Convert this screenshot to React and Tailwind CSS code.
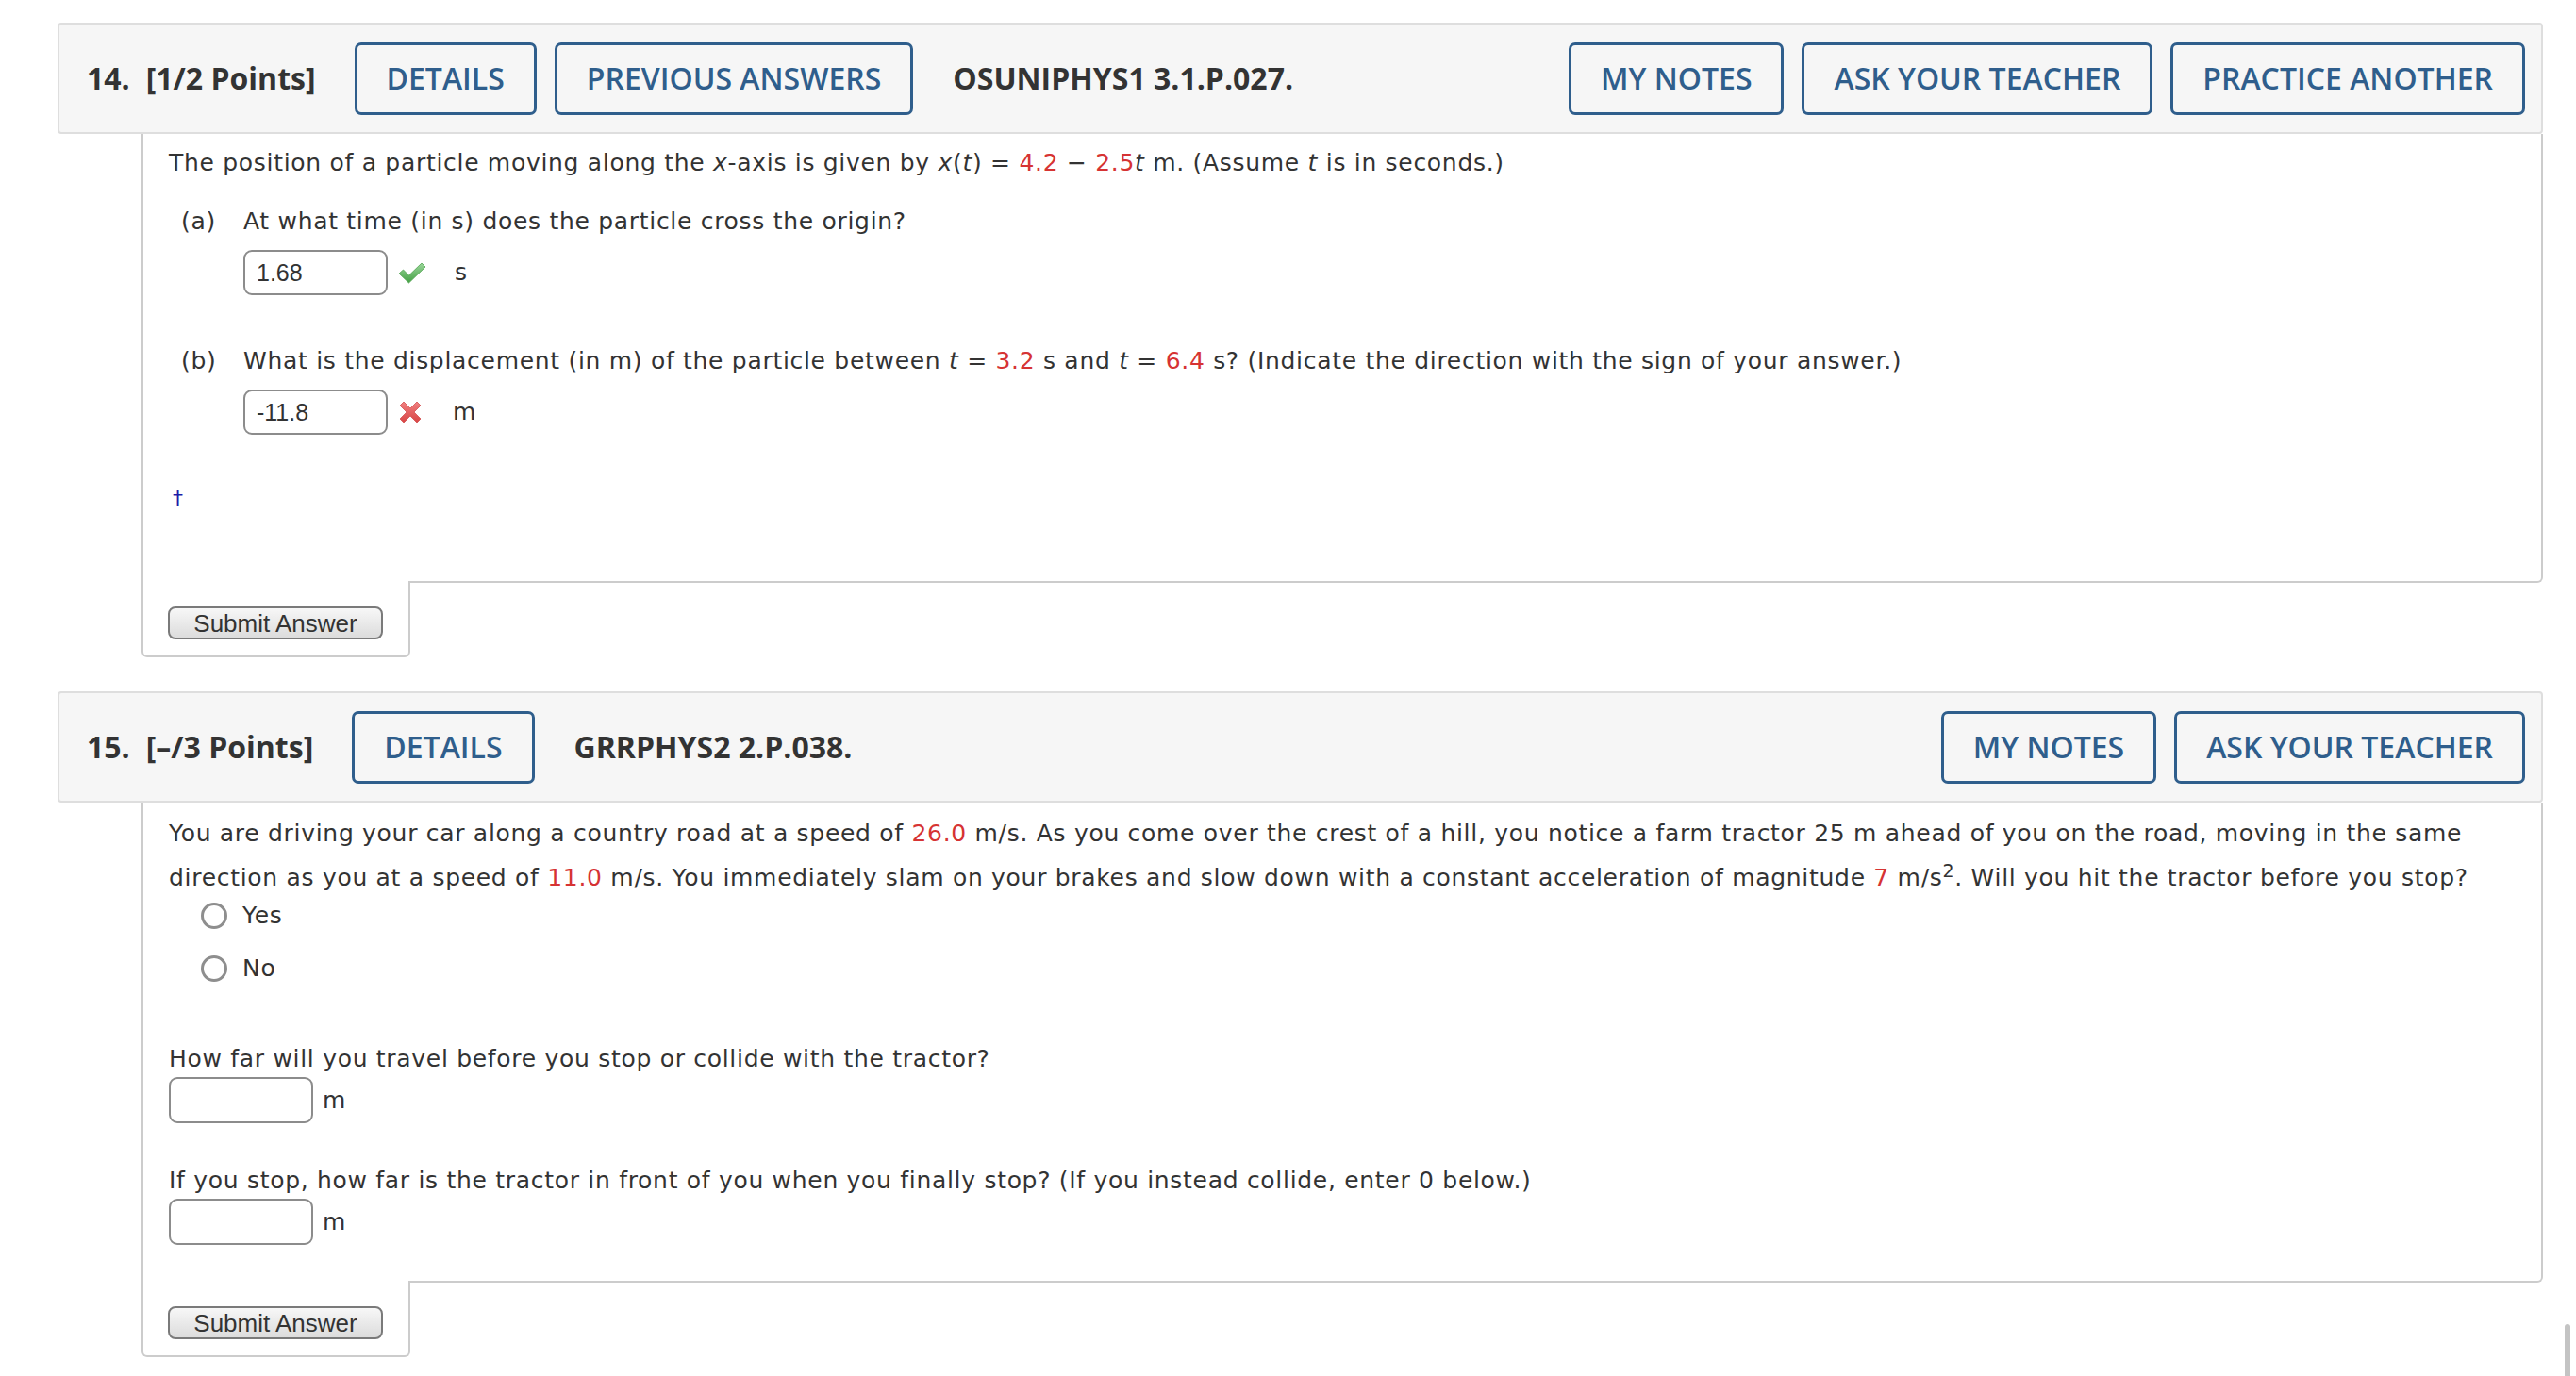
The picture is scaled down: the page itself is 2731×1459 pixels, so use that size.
import React from 'react';

const HEAD_FONT = "font-['Open_Sans',sans-serif]";
const BODY_FONT = "font-['DejaVu_Sans',Verdana,sans-serif]";
const ARIAL = "font-['Liberation_Sans',Arial,sans-serif]";

const HeadBtn = ({ children }) => (
  <button
    type="button"
    className="h-[77px] px-[31px] border-[3px] border-[#2f5e8c] rounded-[7px] text-[#2f5e8c] text-[32px] font-semibold leading-none whitespace-nowrap bg-transparent"
  >
    {children}
  </button>
);

const QuestionHeader = ({ num, points, code, left, right }) => (
  <div
    className={`h-[118px] flex items-center bg-[#f6f6f6] border-2 border-[#dedede] rounded-[4px] pl-[29px] pr-[17px] text-[32px] text-[#333] ${HEAD_FONT}`}
  >
    <span className="font-bold">{num}</span>
    <span className="font-bold ml-[17px]">{points}</span>
    <div className="flex gap-[19px] ml-[41px]">
      {left.map((b) => (
        <HeadBtn key={b}>{b}</HeadBtn>
      ))}
    </div>
    <span className="font-bold ml-[42px]">{code}</span>
    <div className="flex gap-[19px] ml-auto">
      {right.map((b) => (
        <HeadBtn key={b}>{b}</HeadBtn>
      ))}
    </div>
  </div>
);

const AnswerBox = ({ value = '', h = 'h-[48px]' }) => (
  <input
    type="text"
    readOnly
    defaultValue={value}
    className={`w-[153px] ${h} border-2 border-[#8c8c8c] rounded-[9px] px-[12px] text-[25px] tracking-normal text-[#333] bg-white outline-none ${ARIAL}`}
  />
);

const CheckIcon = () => (
  <svg width="30" height="24" viewBox="0 0 30 24" className="ml-[11px]">
    <defs>
      <linearGradient id="chk" x1="0" y1="0" x2="0" y2="1">
        <stop offset="0" stopColor="#9ad69a" />
        <stop offset="1" stopColor="#44a044" />
      </linearGradient>
    </defs>
    <path d="M1 13 L5.5 9 L11.5 15 L25 2 L29 6 L11.5 23 Z" fill="url(#chk)" stroke="#52a552" strokeWidth="0.8" strokeLinejoin="round" />
  </svg>
);

const CrossIcon = () => (
  <svg width="26" height="24" viewBox="0 0 26 24" className="ml-[11px]">
    <defs>
      <linearGradient id="crs" x1="0" y1="0" x2="0" y2="1">
        <stop offset="0" stopColor="#f08080" />
        <stop offset="1" stopColor="#d84545" />
      </linearGradient>
    </defs>
    <path
      d="M2 5 L6 1 L13 8 L20 1 L24 5 L17 12 L24 19 L20 23 L13 16 L6 23 L2 19 L9 12 Z"
      fill="url(#crs)"
      stroke="#d35050"
      strokeWidth="0.8"
      strokeLinejoin="round"
    />
  </svg>
);

const Red = ({ children }) => <span className="text-[#d63333]">{children}</span>;

const SubmitTab = () => (
  <div className="relative ml-[89px] -mt-[2px] w-[285px] bg-white border-x-2 border-b-2 border-[#cccccc] rounded-b-[6px] pt-[27px] pb-[17px] pl-[26px]">
    <button
      type="button"
      className={`h-[35px] w-[228px] border-2 border-[#7a7a7a] rounded-[8px] bg-gradient-to-b from-[#f7f7f7] to-[#dcdcdc] text-[26px] leading-none text-[#333] ${ARIAL}`}
    >
      Submit Answer
    </button>
  </div>
);

const Radio = ({ label, className = '' }) => (
  <div className={`flex items-center h-[36px] pl-[34px] ${className}`}>
    <span className="w-[28px] h-[28px] rounded-full border-[3px] border-[#8e8e8e] bg-white" />
    <span className="ml-[16px]">{label}</span>
  </div>
);

export default function App() {
  return (
    <div className="relative w-[2731px] h-[1459px] overflow-hidden bg-white">
      <div className="pl-[61px] pr-[35px] pt-[24px]">
        {/* Question 14 */}
        <QuestionHeader
          num="14."
          points="[1/2 Points]"
          code="OSUNIPHYS1 3.1.P.027."
          left={['DETAILS', 'PREVIOUS ANSWERS']}
          right={['MY NOTES', 'ASK YOUR TEACHER', 'PRACTICE ANOTHER']}
        />
        <div
          className={`ml-[89px] border-x-2 border-b-2 border-[#cccccc] rounded-br-[6px] pl-[27px] pr-[8px] pt-[13px] pb-[69px] text-[25px] tracking-[0.7px] leading-[36px] text-[#333] ${BODY_FONT}`}
        >
          <p>
            The position of a particle moving along the <i>x</i>-axis is given by <i>x</i>(<i>t</i>) ={' '}
            <Red>4.2</Red> − <Red>2.5</Red>
            <i>t</i> m. (Assume <i>t</i> is in seconds.)
          </p>
          <div className="flex mt-[26px] pl-[13px]">
            <span className="w-[66px]">(a)</span>
            <span>At what time (in s) does the particle cross the origin?</span>
          </div>
          <div className="flex items-center mt-[12px] pl-[79px]">
            <AnswerBox value="1.68" />
            <CheckIcon />
            <span className="ml-[30px]">s</span>
          </div>
          <div className="flex mt-[52px] pl-[13px]">
            <span className="w-[66px]">(b)</span>
            <span>
              What is the displacement (in m) of the particle between <i>t</i> = <Red>3.2</Red> s and <i>t</i> ={' '}
              <Red>6.4</Red> s? (Indicate the direction with the sign of your answer.)
            </span>
          </div>
          <div className="flex items-center mt-[12px] pl-[79px]">
            <AnswerBox value="-11.8" />
            <CrossIcon />
            <span className="ml-[32px]">m</span>
          </div>
          <div className="mt-[50px] pl-[4px] text-[#1c1ca8] text-[22px]">†</div>
        </div>
        <SubmitTab />

        {/* Question 15 */}
        <div className="mt-[36px]">
          <QuestionHeader
            num="15."
            points="[–/3 Points]"
            code="GRRPHYS2 2.P.038."
            left={['DETAILS']}
            right={['MY NOTES', 'ASK YOUR TEACHER']}
          />
        </div>
        <div
          className={`ml-[89px] border-x-2 border-b-2 border-[#cccccc] rounded-br-[6px] pl-[27px] pr-[8px] pt-[9px] pb-[38px] text-[25px] tracking-[0.7px] leading-[36px] text-[#333] ${BODY_FONT}`}
        >
          <p className="leading-[47px] whitespace-nowrap">
            You are driving your car along a country road at a speed of <Red>26.0</Red> m/s. As you come over the
            crest of a hill, you notice a farm tractor 25 m ahead of you on the road, moving in the same
            <br />
            direction as you at a speed of <Red>11.0</Red> m/s. You immediately slam on your brakes and slow down
            with a constant acceleration of magnitude <Red>7</Red> m/s
            <sup className="text-[19px] leading-none">2</sup>. Will you hit the tractor before you stop?
          </p>
          <Radio label="Yes" className="-mt-[1px]" />
          <Radio label="No" className="mt-[20px]" />
          <p className="mt-[60px]">How far will you travel before you stop or collide with the tractor?</p>
          <div className="flex items-center mt-[1px]">
            <AnswerBox h="h-[49px]" />
            <span className="ml-[10px]">m</span>
          </div>
          <p className="mt-[43px]">
            If you stop, how far is the tractor in front of you when you finally stop? (If you instead collide, enter 0
            below.)
          </p>
          <div className="flex items-center mt-[1px]">
            <AnswerBox h="h-[49px]" />
            <span className="ml-[10px]">m</span>
          </div>
        </div>
        <SubmitTab />
      </div>

      {/* scrollbar thumb */}
      <div className="absolute right-[6px] top-[1404px] w-[6px] h-[60px] rounded-t-[3px] bg-[#c4c4c4]" />
    </div>
  );
}
